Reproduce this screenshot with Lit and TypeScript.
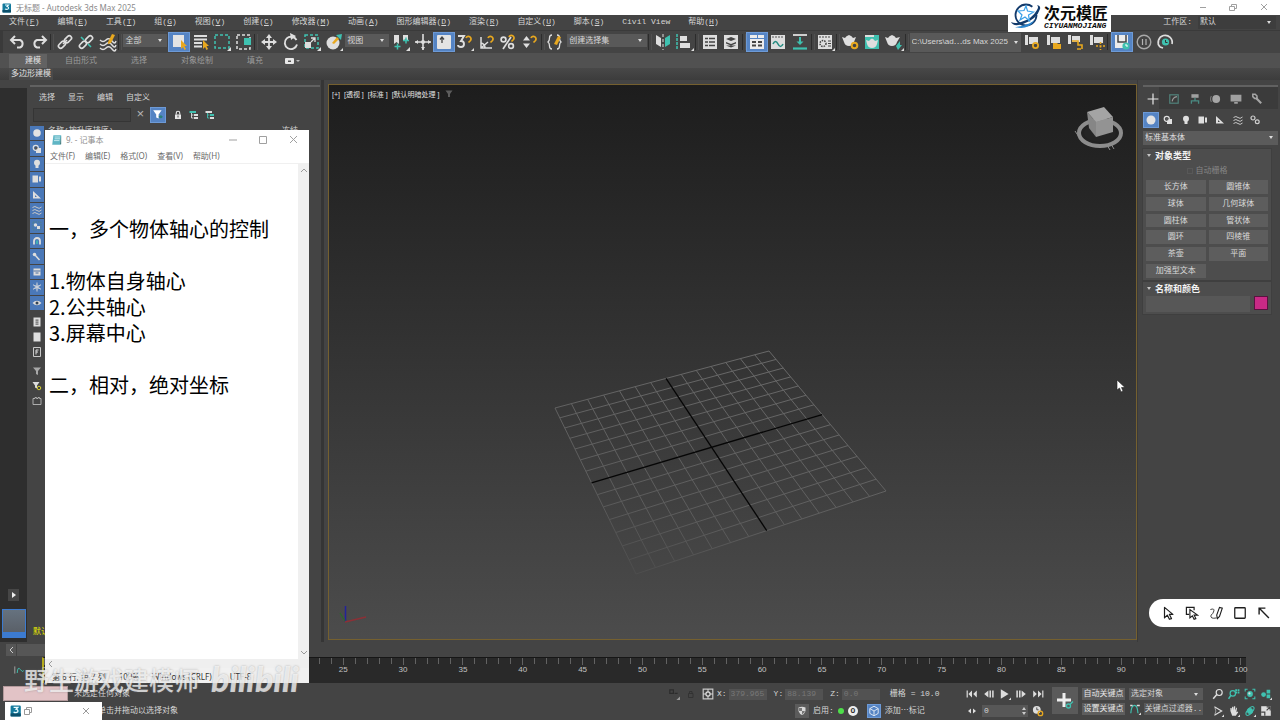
import { LitElement, html, svg, css, nothing } from "lit";
import { customElement, state } from "lit/decorators.js";

const L = "#dedede";
const T = "#3fc1b0";
const G = "#e8a81f";

/* Every glyph is drawn in a 20 x 20 box. */
const glyphs: Record<string, unknown> = {
  undo: svg`<path d="M7 4 3 8l4 4M3.500 8H12a4 4 0 0 1 0 7.500H9" fill="none" stroke=${L} stroke-width="2"/>`,
  redo: svg`<path d="m13 4 4 4-4 4M16.500 8H8a4 4 0 0 0 0 7.500h3" fill="none" stroke=${L} stroke-width="2"/>`,
  link: svg`<g fill="none" stroke=${L} stroke-width="1.600"><rect x="9" y="5" width="8" height="4.500" rx="2.200" transform="rotate(-45 13 7.200)"/><rect x="3" y="10.500" width="8" height="4.500" rx="2.200" transform="rotate(-45 7 12.800)"/><path d="m8 12 4-4"/></g>`,
  unlink: svg`<g fill="none" stroke-width="1.600"><rect x="9" y="5" width="8" height="4.500" rx="2.200" transform="rotate(-45 13 7.200)" stroke=${L}/><rect x="3" y="10.500" width="8" height="4.500" rx="2.200" transform="rotate(-45 7 12.800)" stroke=${L}/><path d="m5 5 3 3M12 12l3 3" stroke=${T}/></g>`,
  bind: svg`<g fill="none" stroke=${L} stroke-width="1.400"><path d="M2 8q3 3 6 0t6 1 4 0M2 12q3 3 6 0t6 1 4 0M2 16q3 3 6 0t6 1 4 0"/></g><path d="m10 10 4-8 3 1-4 8-3 1z" fill=${G}/>`,
  pick: svg`<rect x="4" y="3" width="11" height="12" fill="#e4e4e4"/><path d="M12 8v9l2-2 1.500 3 1.500-1-1.500-3H18z" fill=${G}/>`,
  byname: svg`<path d="M3 4h13M3 7.500h13M3 11h8M3 14.500h8" stroke=${L} stroke-width="1.800"/><path d="M12 8v9l2-2 1.500 3 1.500-1-1.500-3H18z" fill=${G}/>`,
  rect: svg`<rect x="3" y="3" width="14" height="13" fill="none" stroke=${T} stroke-width="1.500" stroke-dasharray="3 2"/><path d="M19 15v4h-4z" fill=${L}/>`,
  windowsel: svg`<rect x="3" y="3" width="13" height="14" fill="none" stroke=${L} stroke-width="1.500" stroke-dasharray="3 2"/><rect x="10" y="6" width="7" height="7" fill=${T}/>`,
  move: svg`<path d="M10 4v12M4 10h12" stroke=${L} stroke-width="1.800"/><path d="m10 2 3 4H7zM10 18l3-4H7zM2 10l4-3v6zM18 10l-4-3v6z" fill=${L}/>`,
  rotate: svg`<path d="M15.500 8a6.200 6.200 0 1 0 .5 4.500" fill="none" stroke=${L} stroke-width="1.900"/><path d="M9 1l6 3-5 4z" fill=${L}/>`,
  scale: svg`<rect x="3" y="3" width="13" height="13" fill="none" stroke=${T} stroke-width="1.500" stroke-dasharray="3 2"/><rect x="3" y="10" width="6" height="6" fill=${L}/><path d="m9 10 4-4m-4 0h4v4" stroke=${L} fill="none" stroke-width="1.300"/><path d="M19 15v4h-4z" fill=${L}/>`,
  place: svg`<circle cx="9" cy="11" r="6.500" fill=${L}/><path d="M12 3l6-1-1 6z" fill=${T}/><path d="M8 11 13 5l2 2-5 5z" fill=${G}/><path d="M19 16v3h-3z" fill=${L}/>`,
  pivot: svg`<path d="M3 3h5v9l-2.500-2L3 12zM12 3h5v6l-2.500-2-2.500 2z" fill=${L}/><path d="M3.500 14.500h6m-3-3v6M12 8.500h6m-3-3v6" stroke=${T} stroke-width="1.500"/><path d="M19 15v4h-4z" fill=${L}/>`,
  manip: svg`<path d="M10 2v16M2 10h16" stroke=${L} stroke-width="1.600"/><circle cx="10" cy="10" r="2" fill=${L}/><path d="m10 18-2-3h4zM2 10l3-2v4zM18 10l-3-2v4z" fill=${L}/>`,
  kbd: svg`<rect x="3" y="3" width="14" height="14" rx="1" fill="#e4e4e4"/><path d="M8 5v6M6 7.500 8 5l2 2.500" stroke="#444" stroke-width="1.300" fill="none"/>`,
  snap3: svg`<path d="M3 4h6l-3 5c4 0 4 6 0 6-2 0-3-1-3-2" fill="none" stroke=${L} stroke-width="1.900"/><path d="M11 6a2.600 2.600 0 1 1 4.500 2.500l-2 2" fill="none" stroke=${G} stroke-width="1.700"/><path d="M19 16v3h-3z" fill=${L}/>`,
  angle: svg`<path d="M4 5v11h11M4 16l7-6M8 16a5 5 0 0 0-4-5" fill="none" stroke=${L} stroke-width="1.500"/><path d="M11 6a2.600 2.600 0 1 1 4.500 2.500l-2 2" fill="none" stroke=${G} stroke-width="1.700"/>`,
  percent: svg`<g fill="none" stroke=${L} stroke-width="1.700"><circle cx="5.500" cy="7.500" r="2.400"/><circle cx="13" cy="14" r="2.400"/><path d="M13 5 5 17"/></g><path d="M11 5a2.600 2.600 0 1 1 4.500 2.500l-2 2" fill="none" stroke=${G} stroke-width="1.700"/>`,
  spin: svg`<path d="m6.500 4 3.500 4.500H3zM6.500 16 10 11.500H3z" fill=${L}/><path d="M11 6a2.600 2.600 0 1 1 4.500 2.500l-2 2" fill="none" stroke=${G} stroke-width="1.700"/>`,
  braces: svg`<path d="M7 3Q4.500 3 4.500 6T3 10q1.500 1 1.500 4T7 17M12 3q2.500 0 2.500 3T16 10q-1.500 1-1.500 4T12 17" fill="none" stroke=${L} stroke-width="1.300"/><path d="m9 12 4-8 3 1-4 8z" fill=${G}/>`,
  mirror: svg`<path d="m3 3 5 3v9l-5-3z" fill=${L}/><path d="m17 3-5 3v9l5-3z" fill=${T}/><path d="M10 2v16" stroke=${L} stroke-dasharray="3 2"/>`,
  align: svg`<path d="M3 2v16" stroke=${T} stroke-width="1.500" stroke-dasharray="3 1"/><path d="M6 4h7v5H6zM6 11h10v5H6z" fill=${L}/><path d="M20 16v3h-3z" fill=${L}/>`,
  layers: svg`<rect x="3" y="3" width="14" height="14" fill=${L}/><path d="M5 6.500h3M5 10h3M5 13.500h3M9 6.500h6M9 10h6M9 13.500h6" stroke="#444" stroke-width="1.500"/>`,
  sceneex: svg`<rect x="3" y="3" width="14" height="14" fill=${L}/><path d="m10 5 5 2-5 2-5-2zM5 10l5 2 5-2v1.500l-5 2-5-2zM5 13.500l5 2 5-2" fill="#444"/>`,
  ribbon: svg`<path d="M3 3h7v3H3zM11 3h6v3h-6zM3 7h14v10H3z" fill="#ececec"/><path d="M5 10h4M5 13.500h4M11 10h4M11 13.500h4" stroke="#444" stroke-width="2"/>`,
  curve: svg`<rect x="3" y="3" width="14" height="14" fill=${L}/><path d="M4 5h12" stroke="#555" stroke-dasharray="2 1"/><path d="M5 12q2.500-5 5 0t5 0" fill="none" stroke="#248c80" stroke-width="1.600"/>`,
  dope: svg`<path d="M3 3h14" stroke=${L} stroke-width="1.800"/><path d="M3 16.500h14" stroke=${T} stroke-width="2.200"/><path d="M10 5v5" stroke=${T} stroke-width="2"/><path d="m10 13-3.500-3.500h7z" fill=${T}/>`,
  matedit: svg`<rect x="3" y="3" width="14" height="14" fill=${L}/><path d="M4 5h12" stroke="#444" stroke-dasharray="2 1"/><circle cx="8" cy="11.500" r="3" fill="none" stroke="#444" stroke-width="1.500" stroke-dasharray="1.500 1"/><path d="M13 9h3M13 11.500h3M13 14h3" stroke="#444"/><path d="M20 16v3h-3z" fill=${L}/>`,
  teagear: svg`<path d="M1 5l3 1q1-2 4-3 3 1 4 3l3-1-2 5q-1 4-5 4t-5-4z" fill=${L}/><circle cx="13.500" cy="13.500" r="2.800" fill="none" stroke=${G} stroke-width="2"/>`,
  teaframe: svg`<rect x="3" y="3" width="14" height="14" fill=${T}/><path d="M3 3h9v2H3z" fill=${L}/><path d="M4 8l3 1q1-2 3-2.500 2 .5 3 2.500l3-1-1 4q-1 4-5 4t-5-4z" fill=${L}/>`,
  tearender: svg`<path d="M1 5l3 1q1-2 4-3 3 1 4 3l4-1-3 5q-1 4-5 4t-5-4z" fill=${L}/><path d="M12 14l4-5v4h2l-4 5z" fill=${T}/><path d="M20 16v3h-3z" fill=${L}/>`,
  p1: svg`<path d="M3 3h3v10H3zM7 5h9v7H7z" fill=${L}/><circle cx="13.500" cy="13.500" r="2.600" fill="none" stroke=${G} stroke-width="1.800"/>`,
  p2: svg`<path d="M3 3h3v10H3zM7 5h9v6H7z" fill=${L}/><path d="M9 11h4l1 1h3v5H9z" fill=${G}/>`,
  p3: svg`<path d="M3 3h3v9H3zM7 4h8v6H7z" fill=${L}/><path d="M7 9h6v4h4v4M12 17h4" fill="none" stroke=${G} stroke-width="1.600"/>`,
  p4: svg`<path d="M3 3h3v10H3zM7 5h9v6H7z" fill=${L}/><path d="M9 14h9M13.500 10v8" stroke=${G} stroke-width="1.600" stroke-dasharray="2 1.500"/>`,
  save: svg`<path d="M3 3h13v13H3z" fill="#ececec"/><path d="M6 3v7h8V3" fill="none" stroke="#444" stroke-width="1.500"/><circle cx="14" cy="14" r="3.600" fill=${T}/><path d="M14 12v2h2" stroke="#fff" fill="none"/>`,
  eleven: svg`<circle cx="10" cy="10" r="6.800" fill="none" stroke="#a8a8a8" stroke-width="1.400"/><path d="M8.500 7v6M12 7v6" stroke="#b4b4b4" stroke-width="1.200"/>`,
  clock: svg`<path d="M17 12a7 7 0 1 0-12 3M5 15l-2-3M5 15l3 1" fill="none" stroke=${L} stroke-width="1.700"/><circle cx="10.500" cy="10" r="3.600" fill=${T}/><path d="M10.500 8v2.500h2" stroke="#333" fill="none"/>`,
  plus: svg`<path d="M10 1v18M1 10h18" stroke="#e8e8e8" stroke-width="2"/>`,
  modify: svg`<rect x="3" y="3" width="14" height="14" fill="none" stroke="#52837c" stroke-width="2"/><path d="M7 14q1-7 8-8" fill="none" stroke="#999" stroke-width="2"/>`,
  hier: svg`<path d="M4 2h12v6H4z" fill="#a0a0a0"/><path d="M4 18v-5h12v5M10 8v5" fill="none" stroke="#4a8a82" stroke-width="2.200"/>`,
  motion: svg`<circle cx="12" cy="10" r="6.500" fill="#a6a6a6"/><path d="M4 5q-3 5 0 10" fill="none" stroke="#7b7b7b" stroke-width="1.800"/>`,
  display: svg`<path d="M1 3h18v11H1zM7 15h6v3H7z" fill="#a0a0a0"/>`,
  wrench: svg`<path d="m8 8 9 9" stroke="#a6a6a6" stroke-width="3.500"/><path d="M3 2v4l3 3h4V5L7 2z" fill="none" stroke="#a6a6a6" stroke-width="2.500"/>`,
  sphere: svg`<circle cx="10" cy="10" r="7.500" fill="#e3e3e3"/>`,
  shapes: svg`<circle cx="7.500" cy="7.500" r="5" fill="none" stroke="#e0e0e0" stroke-width="2.500"/><path d="M8 8h10v10H8z" fill="#e0e0e0"/><circle cx="8" cy="8" r="3" fill="#555"/>`,
  bulb: svg`<circle cx="10" cy="7.500" r="6" fill="#dedede"/><path d="M7 12h6v6H7z" fill="#dedede"/>`,
  camera: svg`<path d="M1 3h11v14H1zM14 5h4v10h-4z" fill="#dedede"/>`,
  tri: svg`<path d="M2 2v15h16zm4 8 4 4H6z" fill="#dedede" fill-rule="evenodd"/>`,
  waves: svg`<path d="M1 5q5-4 9 0t9-1M1 11q5-4 9 0t9-1M1 17q5-4 9 0t9-1" fill="none" stroke="#c8c8c8" stroke-width="2"/>`,
  gears: svg`<g fill="none" stroke="#d0d0d0" stroke-width="2.400"><circle cx="6" cy="6" r="4"/><circle cx="14.500" cy="13.500" r="3.800"/></g>`,
  group: svg`<rect x="2" y="2" width="16" height="16" fill="none" stroke="#52837c" stroke-width="1.500" stroke-dasharray="3 2"/><circle cx="7" cy="8" r="3.500" fill="#ddd"/><path d="M10 10h6v6h-6z" fill="#ddd"/>`,
  magnet: svg`<path d="M4 17v-7a6 6 0 0 1 12 0v7" fill="none" stroke="#ddd" stroke-width="3.600"/><path d="M10 9v7" stroke=${T} stroke-width="3"/>`,
  bone: svg`<path d="m6 6 9 10" stroke="#ddd" stroke-width="3"/><circle cx="5" cy="5" r="3.500" fill="#ddd"/>`,
  box: svg`<path d="M3 3h14v14H3z" fill="#ddd"/><path d="M3 8h14M7 12h6" stroke="#4b6f9f" stroke-width="2"/>`,
  snow: svg`<path d="M10 1v18M2 5.500l16 9M18 5.500l-16 9" stroke="#ddd" stroke-width="1.800"/><circle cx="10" cy="10" r="4" fill="none" stroke="#ddd"/>`,
  eye: svg`<path d="M1 10q9-9 18 0-9 9-18 0z" fill="#ddd"/><circle cx="10" cy="10" r="3" fill="#345"/>`,
  listall: svg`<path d="M3 1h14v18H3z" fill="#ddd"/><path d="M7 6h6M7 10h6M7 14h6" stroke="#666" stroke-width="2.500"/>`,
  listnone: svg`<path d="M3 1h14v18H3z" fill="#ddd"/>`,
  listinv: svg`<path d="M3 1h14v18H3z" fill="none" stroke="#c8c8c8" stroke-width="2"/><path d="M8 15V6h5M8 10h4" fill="none" stroke="#ddd" stroke-width="2"/>`,
  funnel: svg`<path d="M2 3h16l-6 7v8l-4-2v-6z" fill="#a8a8a8"/>`,
  funnelgear: svg`<path d="M1 2h14l-5 7v6l-4-2V9z" fill="#ddd"/><circle cx="14" cy="14" r="3.500" fill="none" stroke="#d8d030" stroke-width="2"/>`,
  bag: svg`<path d="M2 5h4V3h3v2h3V3h3v2h3v12H2z" fill="none" stroke="#b8b8b8" stroke-width="1.800"/>`,
  filter: svg`<path d="M2 2h14l-5 7v7l-4-2V9z" fill="#fff"/><path d="M11 13q4-5 7 0-3 5-7 0z" fill="#2a8078"/>`,
  lock: svg`<path d="M4 9h12v9H4z" fill="#e8e8e8"/><path d="M6.500 9V6a3.500 3.500 0 0 1 7 0v3" fill="none" stroke="#e8e8e8" stroke-width="2.200"/><path d="M10 11v4" stroke="#444" stroke-width="2"/>`,
  tree: svg`<path d="M1 2h13v4H1z" fill=${T}/><path d="M5 6v10h4M5 10h4" stroke="#ddd" fill="none" stroke-width="1.800"/><path d="M10 8h8v4h-8zM10 14h8v4h-8z" fill="#ddd"/>`,
  tree2: svg`<path d="M1 2h13v4H1z" fill="#ddd"/><path d="M5 6v10h4M5 10h4" stroke=${T} fill="none" stroke-width="1.800"/><path d="M10 8h8v4h-8z" fill=${T}/><path d="M10 14h8v4h-8z" fill="#ddd"/>`,
  first: svg`<path d="M2 4v12" stroke=${L} stroke-width="2"/><path d="M10 4v12l-6-6zM18 4v12l-6-6z" fill=${L}/>`,
  prev: svg`<path d="M9 4v12l-7-6z" fill=${L}/><path d="M12 4v12M16.500 4v12" stroke=${L} stroke-width="2.500"/>`,
  play: svg`<path d="m3 2 13 8-13 8z" fill=${L}/><path d="M20 16v4h-4z" fill=${L}/>`,
  next: svg`<path d="M11 4v12l7-6z" fill=${L}/><path d="M3.500 4v12M8 4v12" stroke=${L} stroke-width="2.500"/>`,
  last: svg`<path d="M18 4v12" stroke=${L} stroke-width="2"/><path d="M2 4v12l6-6zM10 4v12l6-6z" fill=${L}/>`,
  keymode: svg`<path d="M8 5v10l-6-5zM12 5v10l6-5z" fill=${L}/>`,
  timecfg: svg`<circle cx="8" cy="8" r="6.500" fill=${L}/><path d="M8 4v4h3" stroke="#444" fill="none" stroke-width="1.500"/><circle cx="14" cy="14" r="3.800" fill="none" stroke=${G} stroke-width="2.200"/>`,
  bigkey: svg`<path d="M9 2v14M2 9h14" stroke="#eee" stroke-width="3"/><circle cx="13.500" cy="15" r="2" fill="none" stroke=${T} stroke-width="1.300"/><path d="m15 13.500 3-3" stroke=${T} stroke-width="1.300"/>`,
  tangent: svg`<path d="M3 17q1-13 6-13t6 13" fill="none" stroke=${T} stroke-width="2"/><path d="M2 4h4M13 4h5" stroke=${L} stroke-width="2.500"/><path d="M20 16v4h-4z" fill=${L}/>`,
  zoom: svg`<circle cx="12" cy="7.500" r="5" fill="none" stroke=${L} stroke-width="2"/><path d="m8 11-6 7" stroke=${L} stroke-width="2.500"/>`,
  zoomall: svg`<circle cx="8" cy="9" r="4.500" fill="none" stroke=${T} stroke-width="2"/><path d="m5 12-4 6" stroke=${T} stroke-width="2.500"/><path d="M12 2h3v3h-3zM16 2h3v3h-3zM12 6h3v3h-3zM16 6h3v3h-3z" fill=${T}/>`,
  extents: svg`<path d="M2 6V2h4M14 2h4v4M18 14v4h-4M6 18H2v-4" fill="none" stroke=${T} stroke-width="1.800"/><circle cx="10" cy="10" r="4.800" fill=${T}/><circle cx="9" cy="9" r="1.800" fill=${L}/>`,
  extall: svg`<circle cx="6" cy="11" r="4" fill=${T}/><path d="M11 3h6v6h-6zM11 11h6v6h-6z" fill=${T}/><path d="M20 16v4h-4z" fill=${L}/>`,
  fov: svg`<path d="m4 3 12 7-12 7" fill="none" stroke=${L} stroke-width="2"/><path d="M5 5q3 5 0 10" fill="none" stroke=${L}/><path d="M20 16v4h-4z" fill=${L}/>`,
  hand: svg`<path d="M4 10V5h2v4l1-6h2v6l1-7h2v7l2-5 1 1-1 7 2-1 1 1-4 6H7z" fill=${L}/><path d="M20 16v4h-4z" fill=${L}/>`,
  orbit: svg`<circle cx="10" cy="10" r="5" fill=${T}/><ellipse cx="10" cy="10" rx="9" ry="4" fill="none" stroke=${T} stroke-width="1.800" transform="rotate(-50 10 10)"/><path d="M20 16v4h-4z" fill=${L}/>`,
  maxim: svg`<path d="M2 2h16v16H2z" fill=${L}/><path d="M2 12h6v6M11 3l6 0v6M17 3l-6 6" fill="none" stroke="#444" stroke-width="2"/>`,
  shield: svg`<path d="M3 3q7-3 14 0v7q-2 6-7 8-5-2-7-8z" fill="#d8d8d8"/><path d="M10 10h6q-2 5-6 7zM4 4h6v6H4z" fill="#777"/>`,
  cube: svg`<path d="m10 2 7 4v8l-7 4-7-4V6zM3 6l7 4 7-4M10 10v8" fill="none" stroke="#dfe8f2" stroke-width="1.600"/>`,
  abs: svg`<path d="M2 2h16v16H2z" fill="none" stroke="#c8c8c8" stroke-width="2"/><circle cx="10" cy="10" r="3.500" fill="none" stroke="#ddd" stroke-width="2"/><path d="M10 2v5M10 13v5M2 10h5M13 10h5" stroke="#ddd" stroke-width="1.600"/>`,
  isolate: svg`<path d="M3 3h6v6H3zM11 9h5" fill="none" stroke="#2c2c2c" stroke-width="2"/><path d="M20 14v6h-6z" fill="#999"/>`,
  locksel: svg`<path d="M5 9h9v8H5zM7 9V5h5v4" fill="none" stroke="#333" stroke-width="2"/>`,
  minicurve: svg`<path d="M3 4v12" stroke="#aaa" stroke-width="1.500"/><path d="M7 15q1-12 5-6t6 2" fill="none" stroke=${T} stroke-width="1.600"/>`,
  arrow: svg`<path d="M5 2v15l4-4 3 6 3-1-3-6h5z" fill="none" stroke="#1e1e1e" stroke-width="1.700" stroke-linejoin="round"/>`,
  arrow2: svg`<path d="M6 12H2V2h11v4" fill="none" stroke="#1e1e1e" stroke-width="1.700"/><path d="M7 5v12l3.500-3 2.500 5 2.500-1-2.500-5H18z" fill="#fff" stroke="#1e1e1e" stroke-width="1.600"/>`,
  pen: svg`<path d="m11 13 4-11 4 1-4 12-3 3z" fill="none" stroke="#1e1e1e" stroke-width="1.600"/><path d="M2 5q6-2 5 2t-4 6q-2 6 8 4" fill="none" stroke="#1e1e1e" stroke-width="1.200"/>`,
  square: svg`<rect x="2.500" y="2.500" width="15" height="15" rx="1" fill="none" stroke="#1e1e1e" stroke-width="1.800"/>`,
  nw: svg`<path d="M17 17 4 4M3 12V3h9" fill="none" stroke="#1e1e1e" stroke-width="2"/>`,
};

const icon = (name: string, size = "i20") =>
  html`<svg class=${size} viewBox="0 0 20 20" aria-hidden="true">${glyphs[name]}</svg>`;

type Cell = { k: "icon"; n: string; label: string; on?: boolean } | { k: "sep" } | { k: "drop"; v: string; label: string; c: string };
const b = (n: string, label: string, on = false): Cell => ({ k: "icon", n, label, on });
const sep: Cell = { k: "sep" };

const toolbar: Cell[] = [
  b("undo", "撤消"), b("redo", "重做"), sep,
  b("link", "选择并链接"), b("unlink", "取消链接"), b("bind", "绑定到空间扭曲"), sep,
  { k: "drop", v: "全部", label: "选择过滤器", c: "w44" },
  b("pick", "选择对象", true), b("byname", "按名称选择"), b("rect", "矩形选择区域"), b("windowsel", "窗口/交叉"), sep,
  b("move", "移动"), b("rotate", "旋转"), b("scale", "缩放"), b("place", "放置"),
  { k: "drop", v: "视图", label: "参考坐标系", c: "w44" },
  b("pivot", "使用轴点中心"), b("manip", "选择并操纵"), b("kbd", "键盘快捷键覆盖", true), b("snap3", "捕捉开关"),
  b("angle", "角度捕捉"), b("percent", "百分比捕捉"), b("spin", "微调器捕捉"), sep,
  b("braces", "管理选择集"),
  { k: "drop", v: "创建选择集", label: "命名选择集", c: "w80" }, sep,
  b("mirror", "镜像"), b("align", "对齐"), sep,
  b("layers", "层资源管理器"), b("sceneex", "场景资源管理器"), sep,
  b("ribbon", "显示功能区", true), b("curve", "曲线编辑器"), b("dope", "图解视图"), sep,
  b("matedit", "材质编辑器"), sep,
  b("teagear", "渲染设置"), b("teaframe", "渲染帧窗口"), b("tearender", "渲染产品"), sep,
  { k: "drop", v: "C:\\Users\\ad⋯ds Max 2025", label: "项目文件夹", c: "w111" },
  b("p1", "项目设置"), b("p2", "打开项目"), b("p3", "项目结构"), b("p4", "项目路径"), sep,
  b("save", "自动保存", true), b("eleven", "保存间隔"), b("clock", "恢复"),
];

const menus: [string, string][] = [
  ["文件", "F"], ["编辑", "E"], ["工具", "T"], ["组", "G"], ["视图", "V"], ["创建", "C"], ["修改器", "M"],
  ["动画", "A"], ["图形编辑器", "D"], ["渲染", "R"], ["自定义", "U"], ["脚本", "S"], ["Civil View", ""], ["帮助", "H"],
];

const note = "\n\n一，多个物体轴心的控制\n\n1.物体自身轴心\n2.公共轴心\n3.屏幕中心\n\n二，相对，绝对坐标";

/* Projects a point of the unit square onto the home grid seen in perspective. */
const corners = [[555, 408], [769, 351], [886, 491], [636, 574]];
function project(u: number, v: number): [number, number] {
  const [[x0, y0], [x1, y1], [x2, y2], [x3, y3]] = corners;
  const dx1 = x1 - x2, dx2 = x3 - x2, dx3 = x0 - x1 + x2 - x3;
  const dy1 = y1 - y2, dy2 = y3 - y2, dy3 = y0 - y1 + y2 - y3;
  const d = dx1 * dy2 - dx2 * dy1;
  const g = (dx3 * dy2 - dx2 * dy3) / d;
  const h = (dx1 * dy3 - dx3 * dy1) / d;
  const w = g * u + h * v + 1;
  return [
    ((x1 - x0 + g * x1) * u + (x3 - x0 + h * x3) * v + x0) / w,
    ((y1 - y0 + g * y1) * u + (y3 - y0 + h * y3) * v + y0) / w,
  ];
}
function gridLines() {
  const n = 14;
  const out: { a: number[]; b: number[]; axis: boolean }[] = [];
  for (let i = 0; i <= n; i++) {
    const t = i / n;
    out.push({ a: project(t, 0), b: project(t, 1), axis: i === n / 2 });
    out.push({ a: project(0, t), b: project(1, t), axis: i === n / 2 });
  }
  return out.sort((p, q) => Number(p.axis) - Number(q.axis));
}

@customElement("app-root")
export class AppRoot extends LitElement {
  @state() private text = note;

  static styles = css`
    :host { display: block; }
    * { box-sizing: border-box; }
    button, select, input, textarea {
      font: inherit; color: inherit; border: 0; background: none; padding: 0; margin: 0;
      border-radius: 0; outline: 0; min-width: 0;
    }
    button { display: flex; align-items: center; justify-content: center; white-space: nowrap; }
    svg { display: block; flex: none; }
    .i20 { width: 20px; height: 20px; }
    .i14 { width: 14px; height: 14px; }
    .i12 { width: 12px; height: 12px; }
    .i10 { width: 10px; height: 10px; }
    .app {
      position: relative; height: 100vh; overflow: hidden; display: grid;
      grid-template-columns: minmax(0, 1fr);
      grid-template-rows: 15px 15px 23px 15px 12px minmax(0, 1fr) 15px 26px 37px;
      background: #444; color: #d6d6d6;
      font: 8px/12px "Liberation Mono", "Noto Sans CJK SC", monospace; white-space: nowrap;
    }
    .title { background: #fff; color: #8a8a8a; display: flex; align-items: center; gap: 4px; padding: 0 8px 0 2px; font-family: "Noto Sans", "Noto Sans CJK SC", sans-serif; }
    .title .name { flex: 1; }

    .menubar { display: flex; align-items: center; gap: 18px; padding: 0 4px 1px 9px; background: #444; }
    .menubar u { text-decoration-thickness: 1px; }
    .work { margin-left: auto; display: flex; align-items: center; gap: 6px; }

    .drop { position: relative; display: flex; height: 13px; background: #595959; }
    .drop select { appearance: none; width: 100%; padding: 0 11px 0 2px; line-height: 12px; }
    .drop::after { content: ""; position: absolute; right: 5px; top: 5px; border: 2px solid transparent; border-top: 3px solid #ddd; border-bottom: 0; pointer-events: none; }
    .w44 { width: 44px; } .w80 { width: 80px; } .w111 { width: 111px; } .w78 { width: 78px; }
    .work .drop { background: #3d3d3d; }

    .tools { display: flex; align-items: center; padding: 0 104px 0 4px; border-left: 3px solid #3a3a3a; border-top: 1px solid #3a3a3a; }
    .tools > button { flex: 1 1 0; height: 20px; }
    .tools .drop { margin: 0 1px; flex: none; align-self: flex-start; margin-top: 3px; }
    .tools .w111 { height: 19px; align-self: center; margin-top: 0; font-family: "Liberation Sans", "Noto Sans CJK SC", sans-serif; }
    .tools .w111::after { top: 8px; right: 3px; }
    .on { background: #5584c4; box-shadow: inset 0 0 0 1px #6d9ad6; }
    .sep { flex: none; width: 4px; height: 16px; border-left: 1px solid #2c2c2c; border-right: 1px solid #505050; }

    .tabs { display: flex; align-items: center; background: #515151; padding: 1px 0 0 9px; color: #9c9c9c; }
    .tabs button { height: 14px; }
    .tabs .cur { width: 38px; background: #626262; color: #e2e2e2; padding-left: 10px; }
    .t2 { margin-left: 18px; } .t3 { margin-left: 34px; }
    .tabs .cap { margin-left: 22px; width: 16px; }
    .strip { background: linear-gradient(#484848, #3c3c3c); display: flex; padding-left: 9px; }
    .strip button { background: #4a4a4a; padding: 0 2px; color: #e0e0e0; }

    .main { display: grid; grid-template-columns: 27px 297px minmax(0, 1fr) 143px; min-height: 0; }
    .rail { background: #2e2e2e; border-top: 8px solid #444; display: flex; flex-direction: column; justify-content: flex-end; align-items: center; gap: 8px; padding-bottom: 4px; }
    .rail .play { width: 11px; height: 12px; background: #464646; }
    .rail .thumb { width: 24px; height: 29px; background: linear-gradient(#66727f, #5a6068); border: 1px solid #3c7bd0; border-bottom-width: 6px; }

    .explorer { padding: 5px 1px 0 3px; display: grid; grid-template-rows: 2px 19px 18px 10px minmax(0, 1fr); border-right: 3px solid #353535; }
    .grip { background: #616161; height: 2px; }
    .emenu { display: flex; align-items: center; gap: 13px; padding: 2px 0 0 9px; }
    .esearch { display: flex; align-items: center; padding-left: 3px; }
    .esearch input { width: 98px; height: 14px; background: #404040; border: 1px solid #353535; }
    .esearch button { width: 16px; height: 16px; }
    .esearch .clr { width: 19px; color: #b5b5b5; font-size: 13px; }
    .esearch .lk { margin-left: 4px; }
    .ehead { display: flex; justify-content: space-between; padding: 1px 22px 0 18px; }
    .ebody { display: flex; flex-direction: column; width: 14px; gap: 1px; margin-top: -8px; margin-bottom: 4px; }
    .blues { display: flex; flex-direction: column; gap: 1px; height: 184px; }
    .blues button { flex: 1; width: 14px; background: #4a78b8; }
    .plain { display: flex; flex-direction: column; padding-top: 3px; }
    .plain button { height: 15px; }
    .plain .gap { margin-top: 4px; }
    .def { margin-top: auto; color: #e8e800; padding-left: 3px; }

    .view { margin: 4px 0 2px 4px; border: 1px solid #75602f; background: linear-gradient(#1d1d1d, #343434 50%, #4c4c4c); min-width: 0; position: relative; display: grid; overflow: hidden; }
    .vlabel { grid-area: 1 / 1; display: flex; align-items: flex-start; gap: 4px; padding: 4px 3px; font: 7px/11px "Liberation Sans", "Noto Sans CJK SC", sans-serif; color: #e0e0e0; }
    .scene { grid-area: 1 / 1; width: 100%; height: 100%; }
    .viewcube { position: absolute; right: 11px; top: 20px; width: 52px; height: 46px; }

    .panel { padding: 5px 2px 0 5px; border-left: 1px solid #3a3a3a; display: flex; flex-direction: column; }
    .ptabs { display: grid; grid-template-columns: repeat(6, 1fr); height: 22px; padding: 2px 11px 0 0; background: linear-gradient(90deg, #444 16px, #3b3b3b 16px); margin-bottom: 3px; }
    .psub { display: grid; grid-template-columns: repeat(7, 1fr); gap: 1px; height: 16px; padding-right: 15px; margin-bottom: 3px; }
    .panel > .drop { height: 14px; background: #5b5b5b; color: #e0e0e0; }
    .roll { background: #4d4d4d; margin: 4px 7px 0 0; padding: 0 3px 2px; box-shadow: 0 0 0 1px #3f3f3f; }
    .roll + .roll { margin-top: 2px; }
    .roll h2 { margin: 0; font: bold 9px/12px "Liberation Sans", "Noto Sans CJK SC", sans-serif; color: #f2f2f2; display: flex; align-items: center; gap: 4px; height: 13px; }
    .roll h2::before { content: ""; margin-left: 1px; border: 2px solid transparent; border-top: 3px solid #c4c4c4; border-bottom: 0; }
    .auto { display: flex; align-items: center; justify-content: center; gap: 3px; color: #858585; height: 18px; }
    .auto input { appearance: none; width: 6px; height: 6px; border: 1px solid #585858; }
    .objs { display: grid; grid-template-columns: 1fr 1fr; grid-template-rows: repeat(6, 1fr); gap: 3px; height: 98px; }
    .objs button { background: #5d5d5d; color: #dadada; }
    .namecol { display: grid; grid-template-columns: 1fr 14px; gap: 4px; height: 16px; margin-top: 1px; }
    .namecol input { background: #575757; width: 100%; }
    .namecol button { background: #c92a86; border: 1px solid #5a1240; height: 14px; }

    .slider { display: flex; align-items: center; padding: 1px 0 1px 6px; gap: 1px; }
    .slider button { background: #565656; width: 10px; height: 12px; }
    .slider .thumb { width: 112px; }
    .track { display: flex; }
    .track .mini { width: 42px; padding-right: 4px; }
    .ruler { flex: 1; background: #292929; border-top: 1px solid #171717; border-left: 2px solid #b5ac1c; display: flex; justify-content: space-between; margin-right: 34px; padding-right: 4px; }
    .tick { width: 0; display: flex; flex-direction: column; align-items: center; font: 8px/10px "Liberation Sans", sans-serif; color: #c2c2c2; }
    .tick::before { content: ""; width: 1px; height: 6px; background: #626262; flex: none; }
    .tick.five::before { height: 7px; }

    .status { display: flex; padding: 3px 7px 1px 3px; }
    .listener { width: 65px; height: 15px; background: #e2c3c6; margin-right: 6px; border: 1px solid #b49a9c; }
    .msgs { flex: 1; display: flex; flex-direction: column; justify-content: space-around; }
    .mid { display: grid; grid-template-rows: 1fr 1fr; width: 296px; }
    .row { display: flex; align-items: center; }
    .row label { display: flex; align-items: center; gap: 2px; margin-left: 7px; }
    .row label:first-of-type { margin-left: 3px; }
    .row label input { width: 38px; height: 11px; background: #525252; color: #777; padding-left: 2px; }
    .gridtxt { margin-left: 10px; }
    .row .lk { margin-right: 6px; }
    .row2 { padding-left: 127px; gap: 4px; }
    .chip { width: 14px; height: 14px; background: #5b5b5b; }
    .chip.on { background: #5584c4; margin-left: 5px; }
    .dot { width: 6px; height: 6px; border-radius: 3px; background: #4ede4a; }
    .round { width: 10px; height: 10px; border-radius: 5px; background: #eee; color: #333; display: flex; align-items: center; justify-content: center; font-weight: bold; }
    .transport { display: grid; grid-template-columns: repeat(5, 1fr); grid-template-rows: 1fr 1fr; width: 82px; align-items: center; justify-items: center; margin-right: 6px; }
    .frame { grid-column: 2 / 5; width: 46px; height: 12px; background: #575757; position: relative; display: flex; }
    .frame input { width: 100%; padding-left: 2px; }
    .frame::before, .frame::after { content: ""; position: absolute; right: 2px; border: 2px solid transparent; }
    .frame::before { top: 2px; border-bottom: 3px solid #ccc; border-top: 0; }
    .frame::after { bottom: 2px; border-top: 3px solid #ccc; border-bottom: 0; }
    .big { width: 26px; height: 27px; background: #5a5a5a; margin: 1px 4px 0 0; }
    .keys { display: grid; grid-template-columns: 43px 74px; grid-template-rows: 12px 12px; gap: 3px 4px; margin: 2px 7px 0 0; }
    .keys > button { background: #5d5d5d; color: #e6e6e6; }
    .keys .drop { height: 12px; }
    .flt { display: grid; grid-template-columns: 12px 1fr; gap: 3px; }
    .flt button:last-child { background: #585858; }
    .nav { display: grid; grid-template-columns: repeat(4, 15px); grid-template-rows: 1fr 1fr; column-gap: 1px; }

    /* floating windows lying over the desktop */
    .notepad { position: absolute; left: 45px; top: 130px; width: 264px; bottom: 37px; background: #fff; color: #6a6a6a; display: grid; grid-template-rows: 19px 15px minmax(0, 1fr) 9px 15px; font-family: "Noto Sans", "Noto Sans CJK SC", sans-serif; }
    .ntitle { display: flex; align-items: center; gap: 3px; padding: 0 11px 0 6px; color: #909090; }
    .ntitle span { flex: 1; }
    .nmenu { display: flex; align-items: center; gap: 10px; padding-left: 5px; border-bottom: 1px solid #f0f0f0; }
    .nbody { display: grid; grid-template-columns: 1fr 11px; }
    .nbody textarea { resize: none; overflow: hidden; color: #000; font: 20px/26px "Noto Sans CJK SC", sans-serif; padding-left: 4px; width: 100%; height: 100%; }
    .vs { background: #f0f0f0; display: flex; flex-direction: column; justify-content: space-between; align-items: center; padding: 2px 0; }
    .hs { background: #efefef; padding-left: 2px; display: flex; align-items: center; }
    .nstat { background: #f1f1f1; color: #333; display: flex; align-items: center; gap: 13px; padding: 3px 0 0 7px; }
    .nstat span:last-child { margin-left: 5px; }
    .mark { position: absolute; left: 24px; bottom: 22px; display: flex; align-items: center; gap: 12px; color: rgba(255, 255, 255, .72); font: 500 25px/38px "Noto Sans CJK SC", sans-serif; text-shadow: 0 0 2px rgba(110, 110, 110, .55); pointer-events: none; }
    .mark b { font: italic 900 34px/38px Lato, sans-serif; }
    .mini-win { position: absolute; left: 5px; bottom: 0; width: 97px; height: 18px; background: #fff; display: flex; align-items: center; padding: 0 11px 0 5px; gap: 1px; }
    .mini-win .x { margin-left: auto; }
    .brand { position: absolute; right: 169px; top: 0; width: 103px; height: 32px; background: #fff; color: #0a0a0a; display: grid; grid-template-columns: 34px 1fr; align-items: center; padding-left: 2px; }
    .brand b { display: block; font: 700 16px/18px "Noto Sans CJK SC", sans-serif; }
    .brand i { display: block; font: italic bold 8px/9px "Liberation Mono", monospace; }
    .pens { position: absolute; right: 0; bottom: 93px; height: 28px; background: #fff; border-radius: 14px 0 0 14px; display: flex; align-items: center; gap: 10px; padding: 0 9px 0 12px; }
    .cursor { position: absolute; right: 154px; top: 379px; width: 10px; height: 14px; }
  `;

  private drop(value: string, label: string, cls = "") {
    return html`<div class="drop ${cls}"><select aria-label=${label}><option>${value}</option></select></div>`;
  }

  private btn(name: string, label: string, cls = "", size = "i12") {
    return html`<button class=${cls} aria-label=${label}>${icon(name, size)}</button>`;
  }

  private logo3(size: string) {
    return html`<svg class=${size} viewBox="0 0 20 20" aria-hidden="true">
      <rect x="1" y="1" width="17" height="18" rx="2" fill="#12799c" />
      <path d="M1 14h17v5H1z" fill="#0b4f6b" />
      <path d="M6 4h7l-3 3q4 1 3 4-2 3-7 1" fill="none" stroke="#e9fbff" stroke-width="2.200" />
    </svg>`;
  }

  private closeX(color: string) {
    return html`<svg class="i10" viewBox="0 0 10 10"><path d="m2 2 6 6M8 2 2 8" stroke=${color} /></svg>`;
  }

  private renderView() {
    return html`
      <section class="view" aria-label="透视">
        <svg class="scene" viewBox="329 85 807 554" preserveAspectRatio="xMidYMid meet">
          <defs>
            <linearGradient id="fade" gradientUnits="userSpaceOnUse" x1="700" y1="351" x2="640" y2="574">
              <stop offset="0" stop-color="#686868" />
              <stop offset=".7" stop-color="#5c5c5c" />
              <stop offset="1" stop-color="#4d4d4d" />
            </linearGradient>
          </defs>
          ${gridLines().map((l) => svg`<line x1=${l.a[0]} y1=${l.a[1]} x2=${l.b[0]} y2=${l.b[1]}
            stroke=${l.axis ? "#060606" : "url(#fade)"} stroke-width=${l.axis ? 1.3 : 1} />`)}
          <path d="M345.500 622V606" stroke="#23239a" stroke-width="1.500" />
          <path d="M345 622 366 617" stroke="#8c3036" stroke-width="1.300" />
          <path d="M345 621 340 613" stroke="#2a6a2a" stroke-width="1.300" />
        </svg>
        <div class="vlabel">
          <span>[+]</span><span>[透视 ]</span><span>[标准 ]</span><span>[默认明暗处理 ]</span>
          <svg class="i10" viewBox="0 0 20 20"><path d="M3 3h14l-5 7v6H8v-6z" fill="#5c5c5c" /></svg>
        </div>
        <svg class="viewcube" viewBox="0 0 52 46" aria-hidden="true">
          <ellipse cx="27" cy="28" rx="21" ry="13" fill="none" stroke="#8c8c8c" stroke-width="4" />
          <ellipse cx="27" cy="28" rx="16" ry="9" fill="#242424" />
          <path d="m14 7 17-5 9 10-17 5z" fill="#a4a4a4" />
          <path d="m14 7 9 10v15L16 23z" fill="#868686" />
          <path d="m23 17 17-5v15l-17 5z" fill="#939393" />
          <path d="m2 26 4 6M34 40l3 5M38 39l3 5" stroke="#8d8d8d" />
        </svg>
      </section>`;
  }

  private renderPanel() {
    const objs = ["长方体", "圆锥体", "球体", "几何球体", "圆柱体", "管状体", "圆环", "四棱锥", "茶壶", "平面", "加强型文本"];
    return html`
      <aside class="panel">
        <div class="grip"></div>
        <div class="ptabs">
          ${[["plus", "创建"], ["modify", "修改"], ["hier", "层次"], ["motion", "运动"], ["display", "显示"], ["wrench", "实用程序"]].map(([n, l]) => this.btn(n, l))}
        </div>
        <div class="psub">
          ${[["sphere", "几何体"], ["shapes", "图形"], ["bulb", "灯光"], ["camera", "摄影机"], ["tri", "辅助对象"], ["waves", "空间扭曲"], ["gears", "系统"]].map(([n, l], i) => this.btn(n, l, i ? "" : "on", i ? "i10" : "i12"))}
        </div>
        ${this.drop("标准基本体", "类别")}
        <section class="roll">
          <h2>对象类型</h2>
          <label class="auto"><input type="checkbox" disabled />自动栅格</label>
          <div class="objs">${objs.map((o) => html`<button>${o}</button>`)}</div>
        </section>
        <section class="roll">
          <h2>名称和颜色</h2>
          <div class="namecol"><input aria-label="名称" /><button aria-label="颜色"></button></div>
        </section>
      </aside>`;
  }

  private renderExplorer() {
    const blues = ["sphere", "shapes", "bulb", "camera", "tri", "waves", "group", "magnet", "bone", "box", "snow", "eye"];
    const plain = ["listall", "listnone", "listinv", "funnel", "funnelgear", "bag"];
    return html`
      <section class="explorer">
        <div class="grip"></div>
        <nav class="emenu"><span>选择</span><span>显示</span><span>编辑</span><span>自定义</span></nav>
        <div class="esearch">
          <input aria-label="查找" /><button class="clr" aria-label="清除">×</button>
          ${this.btn("filter", "过滤器", "on")}${this.btn("lock", "锁定", "lk", "i10")}
          ${this.btn("tree", "层次", "", "i10")}${this.btn("tree2", "展开", "", "i10")}
        </div>
        <div class="ehead"><span>名称(按升序排序)</span><span>冻结</span></div>
        <div class="ebody">
          <div class="blues">${blues.map((n) => this.btn(n, n, "", "i10"))}</div>
          <div class="plain">${plain.map((n, i) => this.btn(n, n, i === 3 ? "gap" : "", "i10"))}</div>
          <span class="def">默认</span>
        </div>
      </section>`;
  }

  private renderStatus() {
    return html`
      <footer class="status">
        <div class="listener"></div>
        <div class="msgs"><span>未选定任何对象</span><span>单击或单击并拖动以选择对象</span></div>
        <div class="mid">
          <div class="row">
            ${this.btn("isolate", "孤立", "lk")}${this.btn("locksel", "选择锁定", "lk", "i10")}${this.btn("abs", "绝对模式")}
            <label>X:<input value="379.965" /></label>
            <label>Y:<input value="88.139" /></label>
            <label>Z:<input value="0.0" /></label>
            <span class="gridtxt">栅格 = 10.0</span>
          </div>
          <div class="row row2">
            ${this.btn("shield", "安全", "chip", "i10")}<span>启用:</span><span class="dot"></span><span class="round">O</span>
            ${this.btn("cube", "标记", "chip on", "i12")}<span>添加⋯标记</span>
          </div>
        </div>
        <div class="transport">
          ${[["first", "转至开头"], ["prev", "上一帧"], ["play", "播放"], ["next", "下一帧"], ["last", "转至结尾"]].map(([n, l]) => this.btn(n, l, "", "i12"))}
          ${this.btn("keymode", "关键点模式", "", "i10")}
          <div class="frame"><input aria-label="当前帧" value="0" /></div>
          ${this.btn("timecfg", "时间配置", "", "i12")}
        </div>
        ${this.btn("bigkey", "设置关键点", "big", "i20")}
        <div class="keys">
          <button>自动关键点</button>${this.drop("选定对象", "关键点集")}
          <button>设置关键点</button>
          <div class="flt">${this.btn("tangent", "切线")}<button>关键点过滤器..</button></div>
        </div>
        <div class="nav">
          ${["zoom", "zoomall", "extents", "extall", "fov", "hand", "orbit", "maxim"].map((n) => this.btn(n, n, "", "i12"))}
        </div>
      </footer>`;
  }

  private renderNotepad() {
    return html`
      <section class="notepad">
        <div class="ntitle">
          <svg class="i12" viewBox="0 0 20 20"><path d="M4 2h13l-1 16H2z" fill="#5fb5c4" /><path d="M6 5h9M6 8h9M5 11h9" stroke="#c9ecf2" stroke-width="1.500" /><path d="M17 2v15h-2z" fill="#477" /></svg>
          <span>9. - 记事本</span>
          <svg width="69" height="10" viewBox="0 0 69 10"><path d="M0 5h8M61 1l7 7M68 1l-7 7" stroke="#a0a0a0" /><path d="M30.500 1.500h7v7h-7z" fill="none" stroke="#a0a0a0" /></svg>
        </div>
        <nav class="nmenu"><span>文件(F)</span><span>编辑(E)</span><span>格式(O)</span><span>查看(V)</span><span>帮助(H)</span></nav>
        <div class="nbody">
          <textarea aria-label="文本编辑器" spellcheck="false" .value=${this.text} @input=${(e: Event) => (this.text = (e.target as HTMLTextAreaElement).value)}></textarea>
          <div class="vs">
            <svg width="6" height="8" viewBox="0 0 6 8"><path d="m0 6 3-3 3 3" fill="none" stroke="#999" /></svg>
            <svg width="6" height="8" viewBox="0 0 6 8"><path d="m0 2 3 3 3-3" fill="none" stroke="#999" /></svg>
          </div>
        </div>
        <div class="hs"><svg width="8" height="6" viewBox="0 0 8 6"><path d="M5 0 2 3l3 3" fill="none" stroke="#999" /></svg></div>
        <div class="nstat"><span>第 6 行, 第 7 列</span><span>100%</span><span>Windows (CRLF)</span><span>UTF-8</span></div>
      </section>`;
  }

  render() {
    return html`
      <div class="app">
        <header class="title">
          ${this.logo3("i10")}<span class="name">无标题 - Autodesk 3ds Max 2025</span>
          <svg width="74" height="10" viewBox="0 0 74 10"><path d="M2 4.500h6M63 1l6 6M69 1l-6 6" stroke="#a0a0a0" /><path d="M31.500 3.500h5v4h-5zM33.500 3V1.500h5v4H37" fill="none" stroke="#a0a0a0" /></svg>
        </header>
        <nav class="menubar">
          ${menus.map(([t, k]) => html`<span>${t}${k ? html`(<u>${k}</u>)` : nothing}</span>`)}
          <div class="work"><span>工作区:</span>${this.drop("默认", "工作区", "w78")}</div>
        </nav>
        <div class="tools" role="toolbar">
          ${toolbar.map((c) => c.k === "sep" ? html`<i class="sep"></i>` : c.k === "drop" ? this.drop(c.v, c.label, c.c) : this.btn(c.n, c.label, c.on ? "on" : "", "i20"))}
        </div>
        <div class="tabs">
          <button class="cur">建模</button><button class="t2">自由形式</button><button class="t3">选择</button>
          <button class="t3">对象绘制</button><button class="t3">填充</button>
          <button class="cap" aria-label="最小化"><svg width="16" height="8" viewBox="0 0 16 8"><rect y="1" width="9" height="6" rx="1" fill="#e8e8e8" /><path d="M3 3.500h3v1.500H3z" fill="#555" /><path d="M11 3h4l-2 2z" fill="#bbb" /></svg></button>
        </div>
        <div class="strip"><button>多边形建模</button></div>
        <main class="main">
          <div class="rail">
            <button class="play" aria-label="展开"><svg width="6" height="6" viewBox="0 0 6 6"><path d="M1 0v6l4-3z" fill="#eee" /></svg></button>
            <button class="thumb" aria-label="视口布局"></button>
          </div>
          ${this.renderExplorer()}
          ${this.renderView()}
          ${this.renderPanel()}
        </main>
        <div class="slider">
          <button aria-label="上一帧"><svg width="6" height="8" viewBox="0 0 6 8"><path d="M5 1 2 4l3 3" fill="none" stroke="#ccc" /></svg></button>
          <button class="thumb" aria-label="时间滑块"></button>
        </div>
        <div class="track">
          ${this.btn("minicurve", "迷你曲线编辑器", "mini")}
          <div class="ruler">
            ${Array.from({ length: 101 }, (_, i) => html`<span class="tick ${i % 5 ? "" : "five"}">${i % 5 ? nothing : i}</span>`)}
          </div>
        </div>
        ${this.renderStatus()}

        ${this.renderNotepad()}
        <div class="mini-win">
          ${this.logo3("i12")}
          <svg class="i10" viewBox="0 0 10 10"><path d="M1.500 3.500h5v5h-5zM3.500 3V1.500h5v5H7" fill="none" stroke="#999" /></svg>
          <button class="x" aria-label="关闭">${this.closeX("#9a9a9a")}</button>
        </div>
        <div class="mark"><span>野生游戏建模师</span><b>bilibili</b></div>
        <div class="brand">
          <svg width="32" height="30" viewBox="0 0 32 30" aria-hidden="true">
            <circle cx="16" cy="14" r="10.500" fill="none" stroke="#123a6b" stroke-width="1.800" stroke-dasharray="56 10" />
            <path d="M1 21q2 5 12 2Q27 18 30 8q1-3-3-4 2 2 0 5-5 9-16 12-6 2-10 0z" fill="#123a6b" />
            <path d="m16 5 1.500 5 6 1-5 3 1 6-4.500-4-5 3 2-5-4-4 6-.5z" fill="#fff" stroke="#3aa0e8" stroke-width="1.200" />
            <path d="M5 26q12 4 20-7-8 6-20 7z" fill="#2b86cf" />
          </svg>
          <div><b>次元模匠</b><i>CIYUANMOJIANG</i></div>
        </div>
        <div class="pens" role="toolbar">
          ${[["arrow", "选择"], ["arrow2", "复制选择"], ["pen", "画笔"], ["square", "矩形"], ["nw", "箭头"]].map(([n, l]) => this.btn(n, l, "", "i14"))}
        </div>
        <svg class="cursor" viewBox="0 0 10 14"><path d="M1 1v10l2.500-2L5 13l2-1-1.500-3.500H9z" fill="#fff" stroke="#222" stroke-width=".6" /></svg>
      </div>`;
  }
}
